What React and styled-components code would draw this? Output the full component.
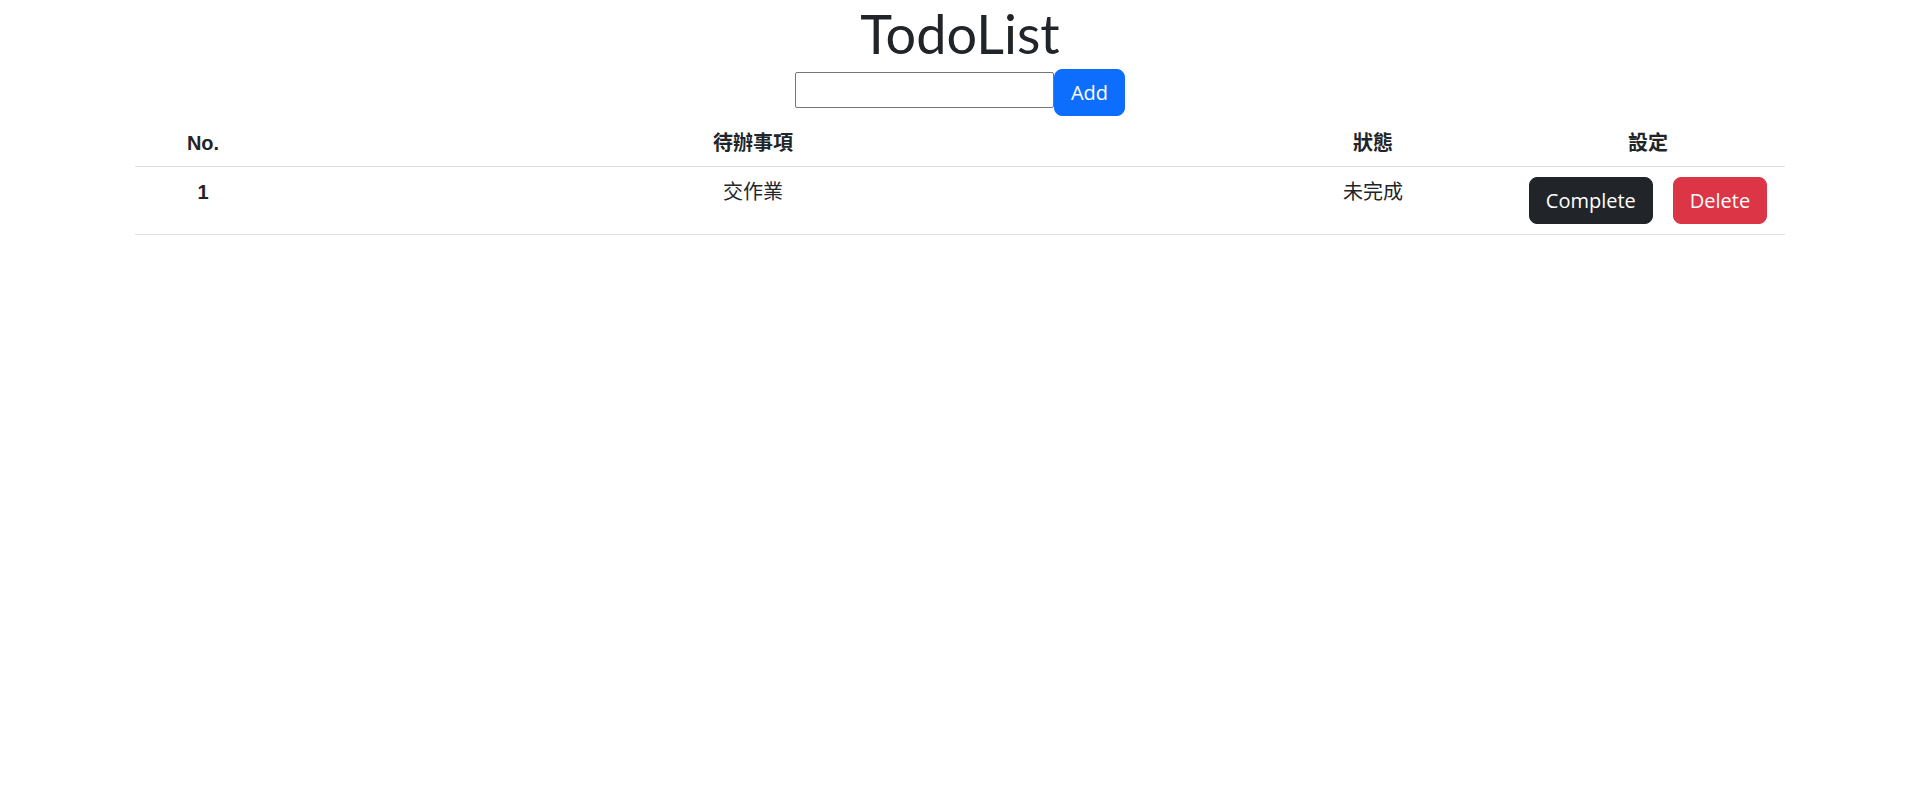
import React, { useState } from "react";
import styled, { createGlobalStyle } from "styled-components";

const GlobalStyle = createGlobalStyle`
  body {
    margin: 0;
    font-family: "Lato", "Noto Sans CJK TC", sans-serif;
    font-size: 20px;
    line-height: 1.5;
    color: #212529;
    background: #fff;
  }
`;

const Wrapper = styled.div`
  display: flex;
  flex-direction: column;
  align-items: center;
`;

const Title = styled.h1`
  margin: 0 0 2px;
  font-size: 54px;
  font-weight: 400;
  line-height: 67px;
  color: #212529;
`;

const Form = styled.form`
  display: flex;
  align-items: flex-start;
`;

const Input = styled.input`
  box-sizing: border-box;
  width: 259px;
  height: 36px;
  margin-top: 3px;
  padding: 1px 3px;
  border: 1px solid #767676;
  border-radius: 2px;
  font: inherit;
  outline: none;
`;

const Button = styled.button`
  box-sizing: border-box;
  padding: 8px 16px;
  border: 1px solid ${(p) => p.$bg};
  border-radius: 8px;
  background: ${(p) => p.$bg};
  color: #fff;
  font-family: "Open Sans", sans-serif;
  font-size: 20px;
  line-height: 29px;
  cursor: pointer;
`;

const Table = styled.table`
  width: 1650px;
  margin-top: 4px;
  table-layout: fixed;
  border-collapse: collapse;
  font-family: "Liberation Sans", "Noto Sans CJK TC", sans-serif;
  font-size: 20px;
  line-height: 30px;
  text-align: center;
`;

const Th = styled.th`
  box-sizing: border-box;
  width: ${(p) => p.$w}px;
  padding: 8px;
  font-weight: 700;
  border-bottom: 1px solid #dee2e6;
`;

const Td = styled.td`
  padding: 10px 8px 8px;
  vertical-align: top;
  font-weight: ${(p) => (p.$bold ? 700 : 400)};
  border-bottom: 1px solid #dee2e6;
`;

const ActionCell = styled.td`
  padding: 8px;
  border-bottom: 1px solid #dee2e6;
`;

const Actions = styled.div`
  display: flex;
  justify-content: center;
  gap: 20px;
  padding: 2px 0;
`;

export default function App() {
  const [text, setText] = useState("");
  const [todos, setTodos] = useState([{ title: "交作業", done: false }]);

  const add = (e) => {
    e.preventDefault();
    if (!text.trim()) return;
    setTodos([...todos, { title: text, done: false }]);
    setText("");
  };

  return (
    <>
      <GlobalStyle />
      <Wrapper>
        <Title>TodoList</Title>
        <Form onSubmit={add}>
          <Input value={text} onChange={(e) => setText(e.target.value)} />
          <Button type="submit" $bg="#0d6efd">
            Add
          </Button>
        </Form>
        <Table>
          <thead>
            <tr>
              <Th $w={136}>No.</Th>
              <Th $w={964}>待辦事項</Th>
              <Th $w={276}>狀態</Th>
              <Th $w={274}>設定</Th>
            </tr>
          </thead>
          <tbody>
            {todos.map((todo, i) => (
              <tr key={i}>
                <Td $bold>{i + 1}</Td>
                <Td>{todo.title}</Td>
                <Td>{todo.done ? "已完成" : "未完成"}</Td>
                <ActionCell>
                  <Actions>
                    <Button
                      $bg="#212529"
                      onClick={() =>
                        setTodos(
                          todos.map((t, j) =>
                            j === i ? { ...t, done: true } : t
                          )
                        )
                      }
                    >
                      Complete
                    </Button>
                    <Button
                      $bg="#dc3545"
                      onClick={() => setTodos(todos.filter((_, j) => j !== i))}
                    >
                      Delete
                    </Button>
                  </Actions>
                </ActionCell>
              </tr>
            ))}
          </tbody>
        </Table>
      </Wrapper>
    </>
  );
}
